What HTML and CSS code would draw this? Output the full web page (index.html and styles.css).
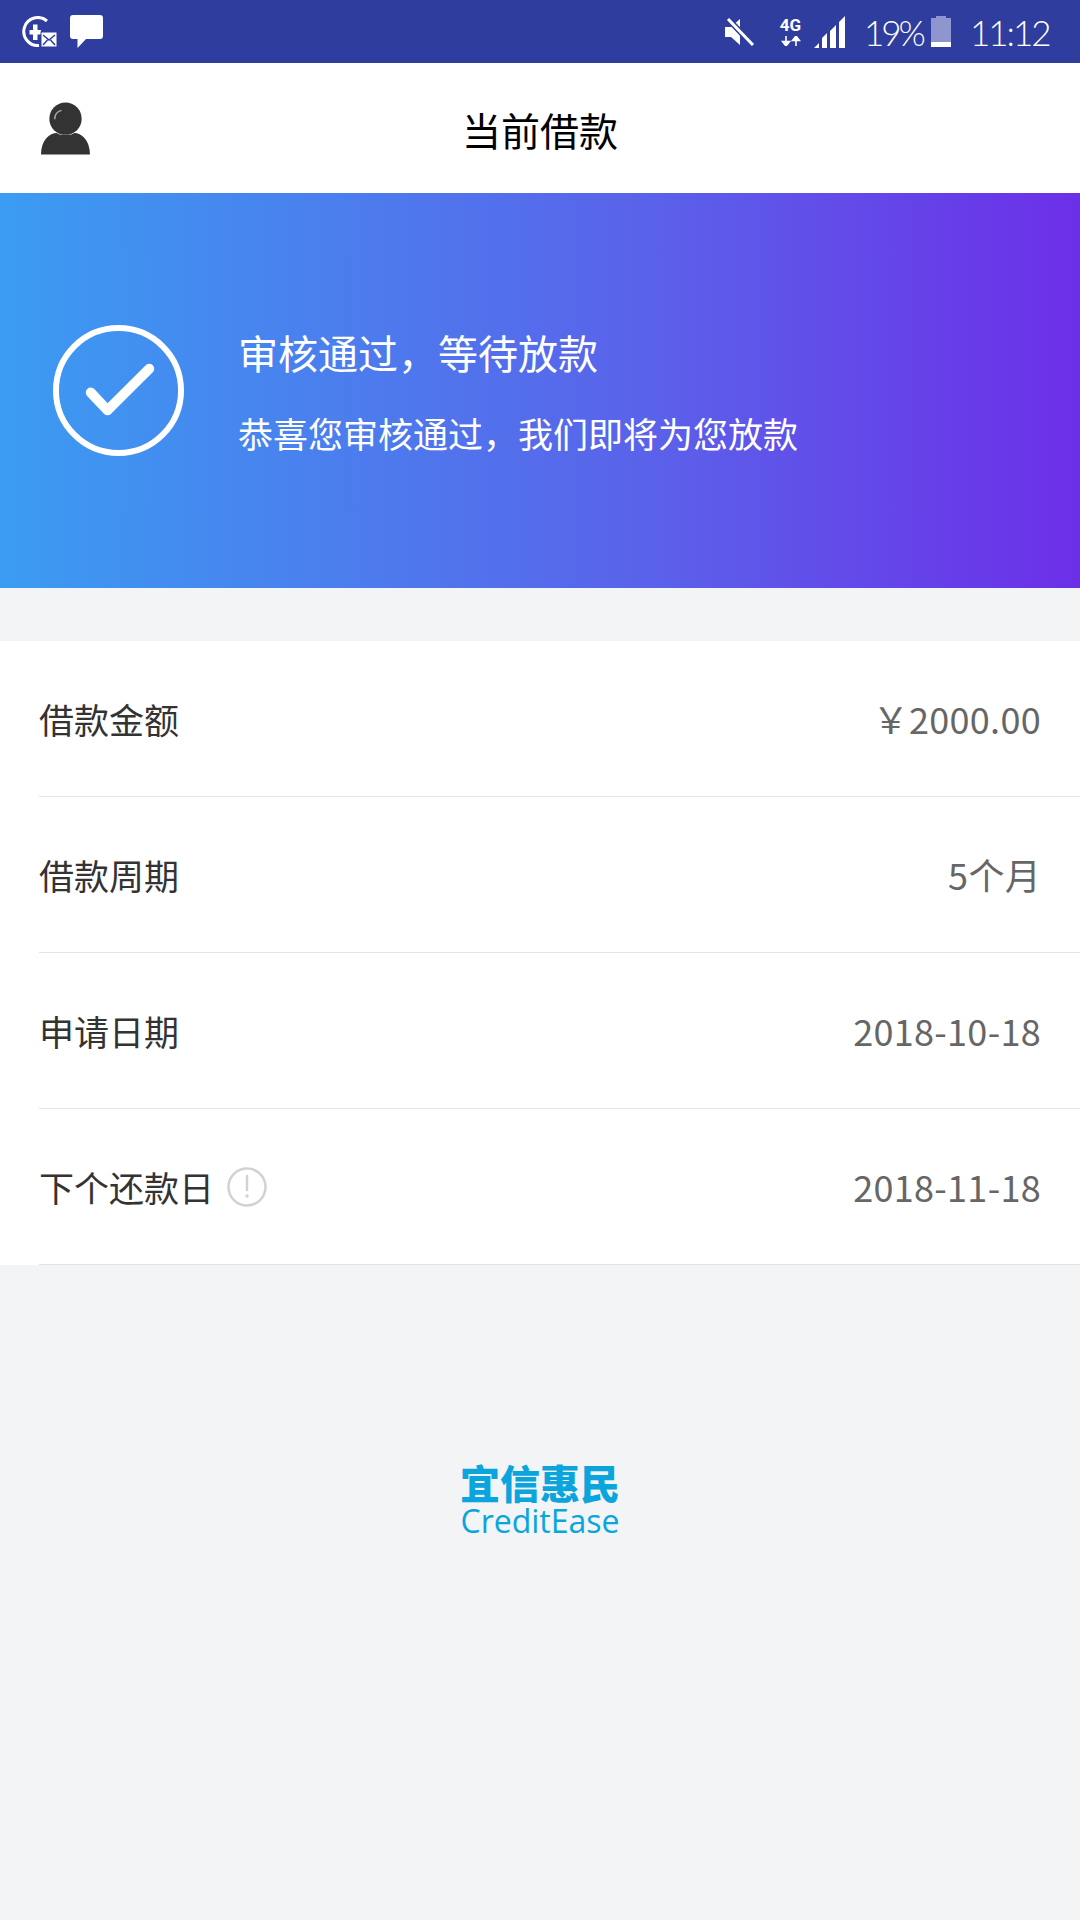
FILE: index.html
```html
<!DOCTYPE html>
<html lang="zh-CN">
<head>
<meta charset="utf-8">
<title>当前借款</title>
<link rel="stylesheet" href="styles.css">
</head>
<body>
<div class="page">
  <header class="status">
    <div class="status-left">
      <svg class="ic-vpn" viewBox="0 0 36 32"><path d="M25 5A14 14 0 1 0 17 29.500" fill="none" stroke="#fff" stroke-width="3"/><path d="M7.500 14H11V8.500h4.500V14H19v4.500h-3.500V24H11v-5.500H7.500z" fill="#fff"/><rect x="19" y="16" width="16" height="15" fill="#fff" stroke="#2e3d9e" stroke-width="1"/><path d="M21 19l6 5 6-5M21 29l4.500-5M33 29l-4.500-5" fill="none" stroke="#2e3d9e" stroke-width="1.500"/></svg>
      <svg class="ic-chat" viewBox="0 0 33 33"><path d="M3 0h27a3 3 0 0 1 3 3v18a3 3 0 0 1-3 3H16L7.500 33V24H3a3 3 0 0 1-3-3V3a3 3 0 0 1 3-3z" fill="#fff"/></svg>
    </div>
    <div class="status-right">
      <svg class="ic-mute" viewBox="0 0 30 28"><path d="M0 9h6l9-8v26l-9-8H0z" fill="#fff"/><path d="M3 1l25 26" stroke="#2e3d9e" stroke-width="6"/><path d="M3 1l25 26" stroke="#fff" stroke-width="3"/></svg>
      <div class="net">
        <span class="net-label">4G</span>
        <svg class="ic-arrows" viewBox="0 0 20 10"><path d="M5 0v6M1.500 5.500L5 10l3.500-4.500z M15 10V4M11.500 4.500L15 0l3.500 4.500z" fill="#fff" stroke="#fff" stroke-width="1.600"/></svg>
      </div>
      <svg class="ic-signal" viewBox="0 0 32 32"><path d="M0 32l5-5v5zM8 32V22l5-5v15zM16 32V15l6-6v23zM25 32V6l6-6v32z" fill="#fff"/></svg>
      <span class="st-text pct">19%</span>
      <svg class="ic-batt" viewBox="0 0 20 31"><path d="M5 0h10v2h5v29H0V2h5z" fill="#8e95cf"/><rect y="26" width="20" height="5" fill="#fff"/></svg>
      <span class="st-text time">11:12</span>
    </div>
  </header>

  <nav class="nav">
    <svg class="ic-user" viewBox="0 0 50 53"><circle cx="25" cy="16.500" r="16.500" fill="#333"/><path d="M0 53c0-15 9-22 16-22 4 3 14 3 18 0 7 0 16 7 16 22z" fill="#333"/><path d="M14 17c0-5 3-8 7-9" fill="none" stroke="#aaa" stroke-width="1.500"/></svg>
    <h1 class="nav-title">当前借款</h1>
  </nav>

  <section class="banner">
    <svg class="ic-check" viewBox="0 0 132 132"><circle cx="66" cy="66" r="63" fill="none" stroke="#fff" stroke-width="6"/><path d="M38 68l17 18 42-42" fill="none" stroke="#fff" stroke-width="10" stroke-linecap="round" stroke-linejoin="round"/></svg>
    <div class="banner-text">
      <p class="banner-title">审核通过，等待放款</p>
      <p class="banner-sub">恭喜您审核通过，我们即将为您放款</p>
    </div>
  </section>

  <section class="list">
    <div class="row"><span class="label">借款金额</span><span class="value">￥2000.00</span></div>
    <div class="row"><span class="label">借款周期</span><span class="value">5个月</span></div>
    <div class="row"><span class="label">申请日期</span><span class="value">2018-10-18</span></div>
    <div class="row">
      <span class="label label-icon">下个还款日
        <svg class="ic-info" viewBox="0 0 40 40"><circle cx="20" cy="20" r="18.500" fill="none" stroke="#d2d2d2" stroke-width="2.500"/><path d="M20 9v14" stroke="#d2d2d2" stroke-width="2.500" stroke-linecap="round"/><circle cx="20" cy="29" r="1.700" fill="#d2d2d2"/></svg>
      </span>
      <span class="value">2018-11-18</span>
    </div>
  </section>

  <footer class="logo">
    <span class="logo-cn">宜信惠民</span>
    <span class="logo-en">CreditEase</span>
  </footer>
</div>
</body>
</html>
```
FILE: styles.css
```css
* { box-sizing: border-box; }
html, body { margin: 0; padding: 0; }
body {
  width: 1080px;
  height: 1920px;
  background: #f2f4f6;
  font-family: "Noto Sans CJK SC", "Noto Sans", sans-serif;
  overflow: hidden;
}
.page { display: flex; flex-direction: column; height: 1920px; }

.status {
  height: 63px;
  background: #2e3d9e;
  display: flex;
  align-items: center;
  justify-content: space-between;
  padding: 0 28px 0 22px;
  color: #fff;
}
.status-left, .status-right { display: flex; align-items: center; }
.ic-vpn { width: 36px; height: 32px; }
.ic-chat { width: 33px; height: 33px; margin-left: 12px; }
.ic-mute { width: 30px; height: 28px; }
.net { display: flex; flex-direction: column; align-items: center; width: 25px; margin-left: 23px; }
.net-label { font: 700 17px/17px "Roboto", sans-serif; }
.ic-arrows { width: 20px; height: 10px; margin-top: 2px; }
.ic-signal { width: 32px; height: 32px; margin-left: 11px; }
.st-text { font-family: "Lato", sans-serif; font-weight: 300; font-size: 35px; line-height: 40px; white-space: nowrap; }
.pct { margin-left: 18px; width: 58px; letter-spacing: -3px; }
.ic-batt { width: 20px; height: 31px; margin-left: 9px; }
.time { margin-left: 19px; width: 82px; letter-spacing: -2px; }

.nav {
  height: 130px;
  background: #fff;
  display: grid;
  grid-template-columns: 1fr auto 1fr;
  align-items: center;
  padding-left: 41px;
}
.ic-user { width: 49px; height: 53px; }
.nav-title { margin: 2px 0 0; font-size: 39px; font-weight: 400; color: #000; line-height: 50px; padding-right: 41px; }

.banner {
  height: 395px;
  background: linear-gradient(90deg, #3b9cf2 0%, #5a62ea 60%, #6c2fe8 100%);
  display: flex;
  align-items: center;
  padding-left: 53px;
  color: #fff;
}
.ic-check { width: 131px; height: 131px; flex: none; }
.banner-text { margin: 3px 0 0 54px; display: flex; flex-direction: column; gap: 30px; }
.banner-title, .banner-sub { margin: 0; }
.banner-title { font-size: 40px; line-height: 52px; }
.banner-sub { font-size: 35px; line-height: 50px; }

.list { margin-top: 53px; background: #fff; }
.row {
  height: 156px;
  margin-left: 39px;
  padding-right: 39px;
  border-bottom: 1px solid #e4e4e4;
  display: flex;
  align-items: center;
  justify-content: space-between;
}
.label { font-size: 35px; color: #333; }
.label-icon { display: flex; align-items: center; }
.ic-info { width: 40px; height: 40px; margin-left: 13px; margin-top: 1px; }
.value { font-size: 36px; letter-spacing: .3px; color: #666; margin-top: -2px; }

.logo {
  margin-top: 197px;
  display: flex;
  flex-direction: column;
  align-items: center;
  gap: 4px;
  color: #0aa5dc;
}
.logo-cn { font-size: 40px; font-weight: 900; line-height: 40px; }
.logo-en { font-family: "Open Sans", sans-serif; font-size: 32px; line-height: 30px; }
```
